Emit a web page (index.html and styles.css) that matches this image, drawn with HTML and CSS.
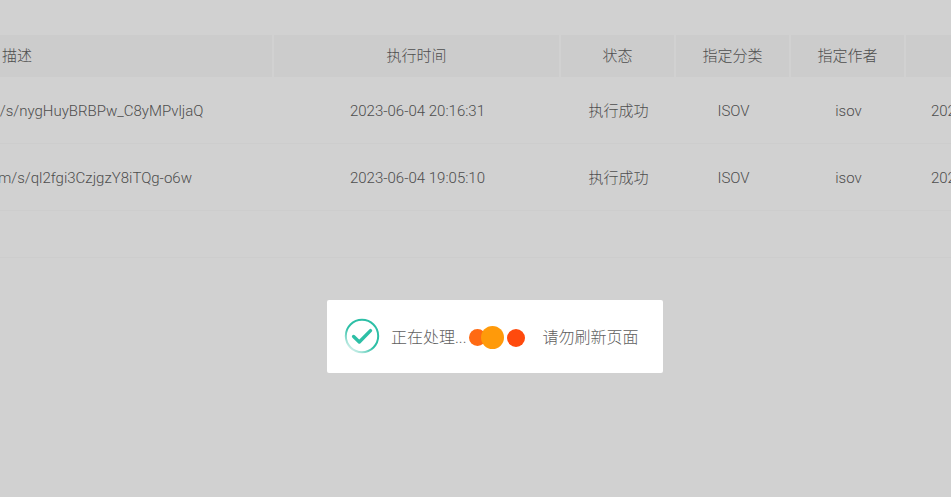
FILE: index.html
```html
<!DOCTYPE html>
<html lang="zh-CN">
<head>
<meta charset="utf-8">
<title>任务列表</title>
<link rel="stylesheet" href="styles.css">
</head>
<body>
<main class="page">
  <table class="tasks">
    <colgroup>
      <col class="c-desc"><col class="c-time"><col class="c-mid"><col class="c-mid"><col class="c-mid"><col class="c-date">
    </colgroup>
    <thead>
      <tr><th>描述</th><th>执行时间</th><th>状态</th><th>指定分类</th><th>指定作者</th><th></th></tr>
    </thead>
    <tbody>
      <tr><td>https://mp.weixin.qq.com/s/nygHuyBRBPw_C8yMPvljaQ</td><td>2023-06-04 20:16:31</td><td class="zh">执行成功</td><td>ISOV</td><td>isov</td><td>2023-06-04 20:16:31</td></tr>
      <tr><td>https://mp.weixin.qq.com/s/ql2fgi3CzjgzY8iTQg-o6w</td><td>2023-06-04 19:05:10</td><td class="zh">执行成功</td><td>ISOV</td><td>isov</td><td>2023-06-04 19:05:10</td></tr>
      <tr class="blank"><td colspan="6"></td></tr>
    </tbody>
  </table>
</main>
<div class="mask">
  <div class="toast">
    <svg class="check" width="36" height="36" viewBox="0 0 36 36" aria-hidden="true">
      <defs>
        <linearGradient id="ring" x1="0.9" y1="0.1" x2="0.25" y2="0.95">
          <stop offset="0" stop-color="#2dbfa6"/>
          <stop offset="0.6" stop-color="#2dbfa6"/>
          <stop offset="1" stop-color="#c4ece5"/>
        </linearGradient>
      </defs>
      <circle cx="18" cy="18" r="16.2" fill="none" stroke="url(#ring)" stroke-width="2"/>
      <path d="M9.6 18.5 L15.3 24 L26.5 12.6" fill="none" stroke="#2dbfa6" stroke-width="3.4" stroke-linecap="round" stroke-linejoin="round"/>
    </svg>
    <span class="label">正在处理...</span>
    <span class="dots"><i class="dot one"></i><i class="dot two"></i><i class="dot three"></i></span>
    <span class="hint">请勿刷新页面</span>
  </div>
</div>
</body>
</html>
```
FILE: styles.css
```css
html, body {
  margin: 0;
  height: 100%;
  overflow: hidden;
  background: #fff;
  font-family: Roboto, "Noto Sans CJK SC", sans-serif;
  font-weight: 300;
  color: #606060;
}
.page {
  padding-top: 35px;
  overflow: hidden;
  width: 951px;
}
.tasks {
  table-layout: fixed;
  width: 1329px;
  margin-left: -238px;
  border-collapse: separate;
  border-spacing: 0;
  font-size: 15px;
}
.c-desc { width: 512px; }
.c-time { width: 287px; }
.c-mid { width: 115px; }
.c-date { width: 185px; }
.tasks th {
  box-sizing: border-box;
  height: 42px;
  padding: 0 0 4px;
  font-weight: 300;
  background: #f9f9f9;
  border-right: 2px solid #fff;
  text-align: center;
}
.tasks td {
  box-sizing: border-box;
  height: 67px;
  padding: 2px 0 0;
  text-align: center;
  white-space: nowrap;
  border-bottom: 1px solid #fafafa;
}
.tasks td.zh { padding: 0 0 2px; }
.tasks .blank td { height: 47px; padding: 0; }
.mask {
  position: fixed;
  inset: 0;
  background: rgba(0, 0, 0, 0.18);
}
.toast {
  position: absolute;
  left: 327px;
  top: 300px;
  box-sizing: border-box;
  width: 336px;
  height: 73px;
  padding-left: 17px;
  display: flex;
  align-items: center;
  background: #fff;
  border-radius: 2px;
  font-size: 16px;
}
.check { margin: -2px 11px 0 0; flex: none; }
.label { white-space: nowrap; padding-bottom: 2px; }
.dots {
  display: flex;
  align-items: center;
  margin: 2px 0 0 2px;
}
.dot { display: block; border-radius: 50%; }
.one { width: 17px; height: 17px; background: #ff6a13; }
.two { width: 23px; height: 23px; margin-left: -5px; background: #ff9a0a; }
.three { width: 18px; height: 18px; margin-left: 3px; background: #ff4a0d; }
.hint { margin-left: 18px; white-space: nowrap; padding-bottom: 2px; }
```
